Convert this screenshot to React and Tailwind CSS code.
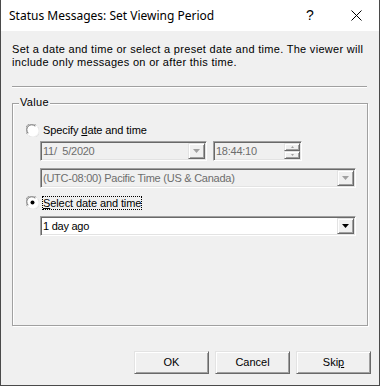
import React from 'react';

const sunken = 'border border-t-[#a0a0a0] border-l-[#a0a0a0] border-b-white border-r-white shadow-[inset_1px_1px_0_#696969,inset_-1px_-1px_0_#e3e3e3]';
const raised = 'border border-t-[#e3e3e3] border-l-[#e3e3e3] border-b-[#696969] border-r-[#696969] shadow-[inset_1px_1px_0_#ffffff,inset_-1px_-1px_0_#a0a0a0] bg-[#f0f0f0]';

function Arrow({ color = '#000' }) {
  return (
    <svg width="7" height="4" viewBox="0 0 7 4">
      <path d="M0 0h7L3.5 4z" fill={color} />
    </svg>
  );
}

function DropButton({ disabled }) {
  return (
    <div className={`${raised} w-[17px] h-[16px] flex items-center justify-center mr-[1px]`}>
      <Arrow color={disabled ? '#a0a0a0' : '#000'} />
    </div>
  );
}

function Combo({ value, width, disabled }) {
  return (
    <div
      className={`${sunken} ${width} h-[20px] flex items-center justify-between ${disabled ? 'bg-[#f0f0f0] text-[#6d6d6d]' : 'bg-white text-black'}`}
    >
      <span className="pl-[2px] whitespace-pre tracking-[-0.25px]">{value}</span>
      <DropButton disabled={disabled} />
    </div>
  );
}

function Radio({ checked }) {
  return (
    <svg width="13" height="13" viewBox="0 0 13 13" className="shrink-0">
      <circle cx="6.5" cy="6.5" r="6" fill="#ffffff" />
      <path d="M1.3 10.2A6 6 0 0 1 10.2 1.3" stroke="#a0a0a0" strokeWidth="1" fill="none" />
      <path d="M2.2 9.2A4.9 4.9 0 0 1 9.2 2.2" stroke="#696969" strokeWidth="1" fill="none" />
      <path d="M11.7 2.8A6 6 0 0 1 2.8 11.7" stroke="#e3e3e3" strokeWidth="1" fill="none" />
      {checked && <circle cx="6.5" cy="6.5" r="2" fill="#000" />}
    </svg>
  );
}

function Button({ children }) {
  return (
    <button className={`${raised} w-[75px] h-[23px] flex items-center justify-center text-black`}>
      {children}
    </button>
  );
}

export default function App() {
  return (
    <div className="w-[380px] h-[386px] flex flex-col bg-[#f0f0f0] border-l border-r border-b border-[#4a4a4a] text-[11px] text-black font-['Liberation_Sans',Arial,sans-serif]">
      {/* Title bar */}
      <div className="h-[31px] bg-white flex items-center shrink-0">
        <span className="pl-[8px] text-[12px] flex-1 whitespace-nowrap font-['Noto_Sans',sans-serif]">Status Messages: Set Viewing Period</span>
        <div className="w-[46px] h-full flex items-center justify-center text-[14px]">?</div>
        <div className="w-[46px] h-full flex items-center justify-center">
          <svg width="11" height="11" viewBox="0 0 11 11">
            <path d="M0.5 0.5l10 10M10.5 0.5l-10 10" stroke="#000" strokeWidth="1" />
          </svg>
        </div>
      </div>

      {/* Body */}
      <div className="flex flex-col pl-[11px] pt-[12px]">
        <p className="leading-[13px] tracking-[0.3px]">
          Set a date and time or select a preset date and time. The viewer will
          <br />
          include only messages on or after this time.
        </p>
        <div className="mt-[17px] w-[355px] border-t border-[#a0a0a0] border-b border-b-white" />

        {/* Group box */}
        <div className="relative mt-[15px] w-[356px] h-[223px] border border-[#a0a0a0] shadow-[1px_1px_0_#ffffff,inset_1px_1px_0_#ffffff] flex flex-col pt-[20px] pl-[13px]">
          <span className="absolute top-[-8px] left-[6px] px-[1px] bg-[#f0f0f0] leading-[13px] tracking-[0.3px]">Value</span>

          <label className="flex items-center gap-[3px] h-[13px]">
            <Radio />
            <span className="pl-[1px] tracking-[-0.1px]">
              Specify <span className="underline">d</span>ate and time
            </span>
          </label>

          <div className="pl-[14px] mt-[4px] flex flex-col gap-[7px]">
            <div className="flex gap-[6px]">
              <Combo value="11/  5/2020" width="w-[167px]" disabled />
              <div className={`${sunken} w-[89px] h-[20px] flex items-center justify-between bg-[#f0f0f0] text-[#6d6d6d]`}>
                <span className="pl-[2px] tracking-[-0.25px]">18:44:10</span>
                <div className="flex flex-col mr-[1px]">
                  <div className={`${raised} w-[16px] h-[8px] flex items-center justify-center`}>
                    <svg width="3" height="2" viewBox="0 0 3 2"><path d="M1.5 0L3 2H0z" fill="#a0a0a0" /></svg>
                  </div>
                  <div className={`${raised} w-[16px] h-[8px] flex items-center justify-center`}>
                    <svg width="3" height="2" viewBox="0 0 3 2"><path d="M0 0h3L1.5 2z" fill="#a0a0a0" /></svg>
                  </div>
                </div>
              </div>
            </div>
            <Combo value="(UTC-08:00) Pacific Time (US & Canada)" width="w-[316px]" disabled />
          </div>

          <label className="flex items-center gap-[3px] h-[13px] mt-[8px]">
            <Radio checked />
            <span className="border border-dotted border-black leading-[12px] tracking-[-0.1px]">
              <span className="underline">S</span>elect date and time
            </span>
          </label>

          <div className="pl-[14px] mt-[7px]">
            <Combo value="1 day ago" width="w-[316px]" />
          </div>
        </div>

        {/* Buttons */}
        <div className="flex justify-end gap-[6px] mt-[25px] pr-[8px]">
          <Button>OK</Button>
          <Button>Cancel</Button>
          <Button>
            <span>
              Ski<span className="underline">p</span>
            </span>
          </Button>
        </div>
      </div>
    </div>
  );
}
